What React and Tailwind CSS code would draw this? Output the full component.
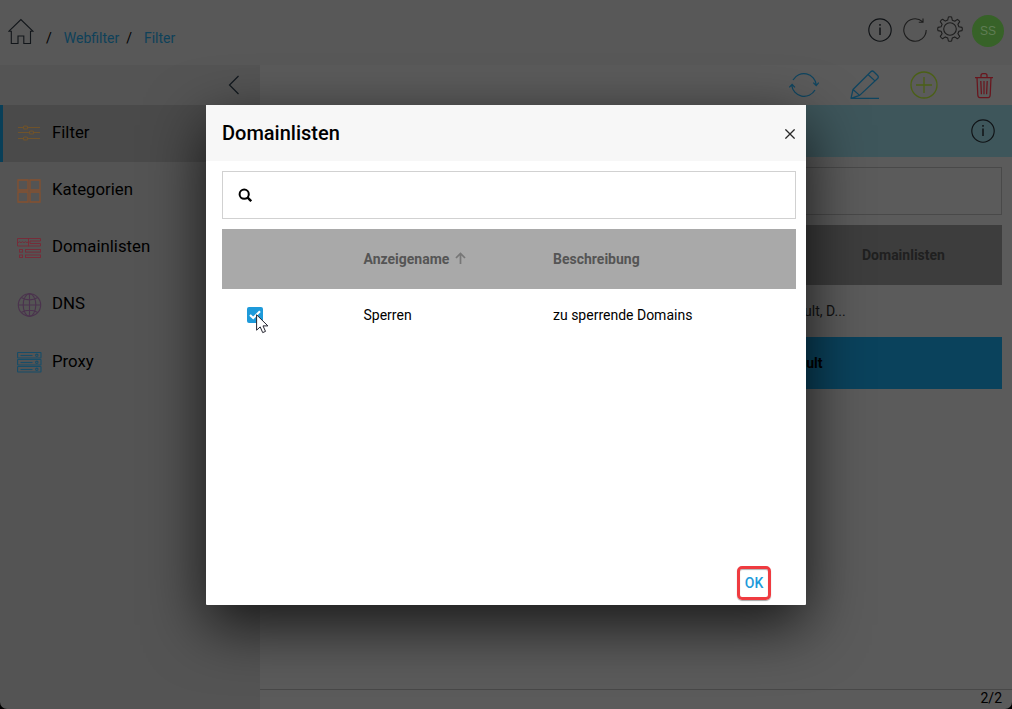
import React from "react";

function Icon({ w = 26, h = 26, color, className = "", sw = 1, children }) {
  return (
    <svg width={w} height={h} viewBox={`0 0 ${w} ${h}`} fill="none" stroke={color} strokeWidth={sw} className={`block shrink-0 ${className}`}>
      {children}
    </svg>
  );
}

const InfoIcon = () => (
  <Icon w={24} h={24} color="#101316" sw={1.15}>
    <circle cx="12" cy="12" r="11.2" />
    <path d="M12 9.5V17M12 6v1.8" strokeWidth="1.5" />
  </Icon>
);

const HomeIcon = () => (
  <Icon w={26} h={27} color="#12161a" sw={1.1}>
    <path d="M1 13.2 12.9 1.5 24.8 13.2H22.5V25.5H15.8V18H10V25.5H3.3V13.2Z" />
  </Icon>
);

const GearIcon = () => (
  <Icon color="#1d1d1d" sw={1.1}>
    <circle cx="13" cy="13" r="6.3" />
    <path strokeLinejoin="round" d="M11.4 1Q13 .4 14.6 1L15.3 4.2 17.8 5.2 20.4 3.4Q22 4 22.7 5.6L20.9 8.4 21.9 10.8 25 11.4Q25.6 13 25 14.6L21.9 15.3 20.9 17.7 22.7 20.4Q22 22 20.4 22.7L17.7 20.9 15.3 21.9 14.6 25Q13 25.6 11.4 25L10.7 21.9 8.3 20.9 5.6 22.7Q4 22 3.3 20.4L5.1 17.7 4.1 15.3 1 14.6Q.4 13 1 11.4L4.1 10.7 5.1 8.3 3.3 5.6Q4 4 5.6 3.3L8.3 5.1 10.7 4.1Z" />
  </Icon>
);

const FilterIcon = () => (
  <Icon w={24} h={16} color="#70532a" sw={1.1}>
    <path d="M1 2.5h5.5M10.5 2.5H23M1 7.5h11.7M16.5 7.5H23M1 13.5h5.5M10.5 13.5H23" />
    <rect x="6.5" y="1" width="4" height="3" rx="1" />
    <rect x="12.5" y="6" width="4" height="3" rx="1" />
    <rect x="6.5" y="12" width="4" height="3" rx="1" />
  </Icon>
);

const CategoryIcon = () => (
  <Icon w={24} h={24} color="#85502f" sw={1.3}>
    <path d="M1 1H11V11H1ZM13 1H23V11H13ZM1 13H11V23H1ZM13 13H23V23H13Z" />
  </Icon>
);

const ListIcon = () => (
  <Icon w={25} h={21} color="#762c39">
    <path d="M.5 1.5H23.5V4H13V6.5H23.5V9H.5ZM11.5 1.3v8M1 5.7l1.5-1 1.5 1 1.5-1 1.5 1 1.5-1 1.5 1 1.5-1" />
    <rect x="2.5" y="12.5" width="3" height="2.6" />
    <rect x="8.5" y="12.5" width="15" height="2.6" />
    <rect x="2.5" y="18" width="3" height="2.5" />
    <rect x="8.5" y="18" width="15" height="2.5" />
  </Icon>
);

const GlobeIcon = () => (
  <Icon w={25} h={24} color="#4b334e" sw={1.1}>
    <circle cx="12.5" cy="12" r="11.2" />
    <ellipse cx="12.5" cy="12" rx="6.3" ry="11.2" />
    <path d="M12.5.8v22.4M1.2 12h22.6M4.3 4.5C8.8 7.6 16.2 7.6 20.7 4.5M4.3 19.5c4.5-3.1 11.9-3.1 16.4 0" />
  </Icon>
);

const ProxyIcon = () => (
  <Icon w={25} h={23} color="#174d68" sw={1.1}>
    {[1.5, 8.5, 15.5].map((y) => (
      <g key={y}>
        <rect x=".6" y={y} width="23.4" height="5.5" rx=".5" />
        <path d={`M3.5 ${y + 3}H15.5`} />
        <circle cx="19.8" cy={y + 2.8} r="1.2" />
      </g>
    ))}
  </Icon>
);

const menu = [
  { label: "Filter", icon: <FilterIcon />, active: true },
  { label: "Kategorien", icon: <CategoryIcon /> },
  { label: "Domainlisten", icon: <ListIcon /> },
  { label: "DNS", icon: <GlobeIcon /> },
  { label: "Proxy", icon: <ProxyIcon /> },
];

function Header() {
  return (
    <header className="flex h-[65px] shrink-0 justify-between bg-[#585858]">
      <nav className="flex pl-2 pt-[18px] text-sm leading-5">
        <HomeIcon />
        <span className="ml-3 mt-2.5 text-black">/</span>
        <span className="ml-3 mt-2.5 text-[#0e415a]">Webfilter</span>
        <span className="ml-[7px] mt-2.5 text-black">/</span>
        <span className="ml-3 mt-2.5 text-[#0e415a]">Filter</span>
      </nav>
      <div className="flex items-start pr-2 pt-[15px]">
        <div className="mt-[2.5px]"><InfoIcon /></div>
        <Icon w={24} h={24} color="#1d1d1d" sw={1.1} className="ml-[11px] mt-[2.5px]">
          <path d="M23.2 12A11.2 11.2 0 1 1 19.5 3.7M15.8 4.2H20V.5" />
        </Icon>
        <div className="ml-2.5 mt-px"><GearIcon /></div>
        <div className="ml-[9px] flex h-8 w-8 items-center justify-center rounded-full bg-[#376228] font-['Liberation_Sans'] text-xs text-[#5f7d54]">SS</div>
      </div>
    </header>
  );
}

function Sidebar() {
  return (
    <aside className="w-[260px] shrink-0 bg-[#545454]">
      <div className="flex h-10 justify-end pr-5 pt-2.5">
        <Icon w={12} h={20} color="#11181e" sw={1.2}><path d="M10.5 1 1.5 10l9 9" /></Icon>
      </div>
      {menu.map((m) => (
        <div key={m.label} className={`flex h-[57.2px] items-center border-l-[3px] pb-[3.4px] ${m.active ? "border-[#093f58] bg-[#4a4a4a]" : "border-transparent"}`}>
          <span className="ml-[13px] flex w-9 pt-[3px]"><span className="flex w-[26px] justify-center">{m.icon}</span></span>
          <span className="text-[16.8px] leading-6 text-black">{m.label}</span>
        </div>
      ))}
    </aside>
  );
}

function Toolbar() {
  return (
    <div className="flex h-10 shrink-0 items-center justify-end pr-[18px]">
      <Icon w={30} h={28} color="#0f4560" sw={1.25}>
        <path d="M4 9A12.5 12.5 0 0 1 27.3 14M24.3 11.6l2.9 3 2.6-3M26 19A12.5 12.5 0 0 1 2.7 14M.3 16.4l2.8-3 2.8 3" />
      </Icon>
      <Icon w={30} h={30} color="#0f4560" sw={1.25} className="ml-[31px]">
        <path strokeLinejoin="round" d="M1 28.3 3 19.5 20.8 1.7q1.6-1.4 3 0l3.8 3.8q1.4 1.4 0 3L9.6 25.4ZM3 19.5l6.6 5.9M18 4.5l7.2 6.6M1 28.4H29" />
      </Icon>
      <Icon w={28} h={28} color="#4b6016" sw={1.3} className="ml-[30px]">
        <circle cx="14" cy="14" r="13" /><path d="M14 6v16M6 14h16" />
      </Icon>
      <Icon w={20} h={27} color="#69151d" sw={1.25} className="ml-[36px]">
        <path d="M1 5.5h18M7 5V3.4Q7 1.5 9 1.5h2q2 0 2 1.9V5M3 5.5 3.8 23q.1 2.5 2 2.5h8.4q1.9 0 2-2.5L17 5.5M6.8 9l.6 13.3M10 9v13.3M13.2 9l-.6 13.3" />
      </Icon>
    </div>
  );
}

function Content() {
  return (
    <main className="flex min-w-0 flex-1 flex-col bg-[#5b5b5b]">
      <Toolbar />
      <div className="flex h-[52px] shrink-0 items-center justify-end bg-[#3e565b] pr-[17px]"><InfoIcon /></div>
      <div className="mx-2.5 mt-2.5 h-12 shrink-0 border border-[#494949]" />
      <div className="mx-2.5 mt-2.5 flex h-[60px] shrink-0 items-center bg-[#3d3d3d] pl-[592px] text-sm font-bold text-[#202020]">Domainlisten</div>
      <div className="mx-2.5 flex h-[52px] shrink-0 items-center pl-[505px] text-sm text-[#111]">Default, D...</div>
      <div className="mx-2.5 flex h-[52px] shrink-0 items-center bg-[#0a425c] pl-[507px] text-sm font-bold text-black">Default</div>
      <div className="flex-1" />
      <div className="flex h-5 shrink-0 justify-end border-t border-[#484848] pr-2.5 text-sm leading-[17px] text-black">2/2</div>
    </main>
  );
}

function Dialog() {
  return (
    <section className="absolute left-[206px] top-[105px] flex h-[500px] w-[600px] flex-col rounded-[1px] bg-white text-black shadow-[0_20px_60px_rgba(0,0,0,0.75)]">
      <header className="flex h-14 items-center justify-between bg-[#f7f7f7] pl-4 pr-[11px]">
        <h2 className="text-xl font-medium">Domainlisten</h2>
        <Icon w={10} h={10} color="#292929" sw={1.3} className="mt-px"><path d="m.4.4 9.2 9.2M9.6.4.4 9.6" /></Icon>
      </header>
      <div className="ml-4 mr-2.5 mt-2.5 flex h-12 items-center border border-[#d1d1d1] pl-[15px]">
        <Icon w={14} h={14} color="#000" sw={2}><circle cx="6.2" cy="6.2" r="4.6" /><path d="m9.4 9.4 3.8 3.8" strokeWidth="2.4" /></Icon>
      </div>
      <div className="ml-4 mr-2.5 mt-2.5 grid h-[60px] grid-cols-[141.5px_189.5px_1fr] items-center bg-[#a9a9a9] text-sm font-bold text-[#555]">
        <span />
        <span className="flex items-center">Anzeigename
          <Icon w={11} h={12} color="#777" sw={1.7} className="mb-0.5 ml-[6px]"><path d="M5.5 12V1.5M1 6l4.5-4.6L10 6" /></Icon>
        </span>
        <span>Beschreibung</span>
      </div>
      <div className="ml-4 mr-2.5 grid h-[52px] grid-cols-[141.5px_189.5px_1fr] items-center text-sm">
        <span className="relative ml-[25px] flex h-4 w-4 items-center justify-center rounded-[2px] bg-[#1e9ada]">
          <Icon w={12} h={10} color="#fff" sw={2.2}><path d="m1 5 3.2 3L11 1.2" /></Icon>
          <svg className="absolute left-[9px] top-[7px]" width="13" height="20" viewBox="0 0 13 20">
            <path d="M.6.8V16.2L4.2 12.9 6.7 18.6 9.5 17.4 7 11.9H11.9Z" fill="#fff" stroke="#24242f" strokeWidth="1" />
          </svg>
        </span>
        <span>Sperren</span>
        <span>zu sperrende Domains</span>
      </div>
      <footer className="mt-auto flex justify-end pb-[5px] pr-[35px]">
        <button className="flex h-[34px] w-[34px] items-center justify-center rounded-[5px] border-[3px] border-[#ef3b40] text-sm font-medium text-[#1e9ada] shadow-[0_1px_1px_rgba(0,0,0,0.35),inset_0_1px_1px_rgba(0,0,0,0.3)]">OK</button>
      </footer>
    </section>
  );
}

export default function App() {
  return (
    <div className="h-[709px] w-[1012px] overflow-hidden bg-black">
      <div className="relative flex h-full flex-col overflow-hidden rounded-b-[7px] font-['Roboto',sans-serif]">
        <Header />
        <div className="flex min-h-0 flex-1">
          <Sidebar />
          <Content />
        </div>
        <Dialog />
      </div>
    </div>
  );
}
